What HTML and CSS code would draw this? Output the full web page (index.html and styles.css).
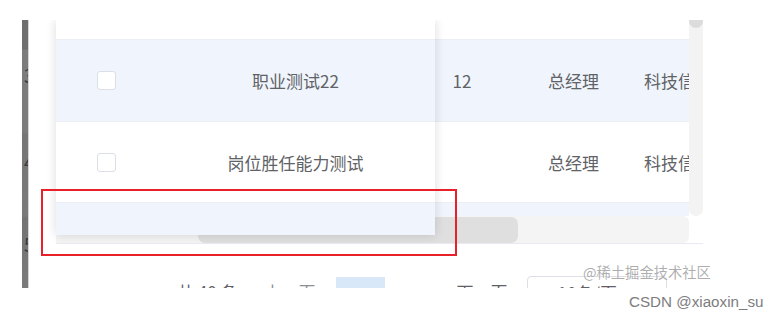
FILE: index.html
```html
<!DOCTYPE html>
<html lang="zh">
<head>
  <meta charset="UTF-8">
  <title>表格固定列</title>
  <link rel="stylesheet" href="styles.css">
</head>
<body>
<div class="page">
  <div class="shot">
    <!-- 左侧被截断的行号栏 -->
    <div class="strip">
      <div class="num num-3">3</div>
      <div class="num num-4">4</div>
      <div class="num num-5">5</div>
    </div>

    <div class="main">
      <div class="table">
        <div class="body">
          <div class="row head"></div>
          <div class="row r1 blue">
            <div class="cell"></div>
            <div class="cell c-num">12</div>
            <div class="cell c-role">总经理</div>
            <div class="cell c-dept">科技信息部</div>
          </div>
          <div class="row r2">
            <div class="cell"></div>
            <div class="cell c-num"></div>
            <div class="cell c-role">总经理</div>
            <div class="cell c-dept">科技信息部</div>
          </div>
          <div class="row r3 blue"></div>
          <div class="hbar"><div class="hthumb"></div></div>
        </div>
        <div class="vbar"><div class="vthumb"></div></div>

        <!-- 左侧固定列 -->
        <div class="fixed">
          <div class="frow head"></div>
          <div class="frow r1 blue">
            <div class="fcell"><span class="check"></span></div>
            <div class="fcell name">职业测试22</div>
          </div>
          <div class="frow r2">
            <div class="fcell"><span class="check"></span></div>
            <div class="fcell name">岗位胜任能力测试</div>
          </div>
          <div class="frow r3f blue"></div>
        </div>
      </div>

      <div class="pager">
        <span class="total">共 40 条</span>
        <span class="prev">上一页</span>
        <span class="active-page"></span>
        <span class="next">下一页</span>
        <span class="sizes">10条/页</span>
      </div>
    </div>
  </div>

  <div class="mark">@稀土掘金技术社区</div>
  <div class="csdn">CSDN @xiaoxin_su</div>
  <div class="redbox"></div>
</div>
</body>
</html>
```

FILE: styles.css
```css
body {
  margin: 0;
  background: #fff;
  font-family: "Noto Sans CJK SC", "Liberation Sans", sans-serif;
  color: #606266;
}

.page {
  position: relative;
  width: 777px;
  height: 319px;
  overflow: hidden;
}

.shot {
  display: flex;
  margin-top: 20px;
  height: 268px;
  overflow: hidden;
}

/* 左边灰色竖条 */
.strip {
  width: 6px;
  margin-left: 22px;
  border-right: 1px solid #d6d6d6;
  background: linear-gradient(#6e6e6e 0, #6e6e6e 29px, #7c7c7c 30px, #7c7c7c 112px, #767676 114px, #7a7a7a 196px, #737373 198px, #7b7b7b 100%);
  overflow: hidden;
}

.num {
  height: 20px;
  line-height: 20px;
  font-size: 18px;
  color: #3a3a3a;
  padding-left: 2px;
}
.num-3 { margin-top: 45px; }
.num-4 { margin-top: 67px; }
.num-5 { margin-top: 62px; }

.main {
  margin-left: 27px;
  width: 647px;
  display: flex;
  flex-direction: column;
}

.table {
  position: relative;
  display: grid;
  grid-template-columns: 633px 14px;
  height: 223px;
  border-bottom: 1px solid #e9ebf0;
}

.body {
  display: flex;
  flex-direction: column;
  overflow: hidden;
}

.row {
  display: grid;
  grid-template-columns: 379px 54px 145px 55px;
  align-items: center;
  font-size: 17px;
  border-bottom: 1px solid #ebeef5;
  box-sizing: border-box;
}

.head { height: 20px; background: #fff; }
.r1 { height: 82px; }
.r2 { height: 81px; background: #fff; }
.r3 { height: 13px; border-bottom: none; }
.blue { background: #f0f5fd; }

.cell { white-space: nowrap; overflow: hidden; }
.c-num { text-align: center; }
.c-role { padding-left: 59px; }
.c-dept { padding-left: 10px; }

.hbar {
  height: 27px;
  background: #f4f4f4;
  border-radius: 0 6px 6px 0;
  padding-left: 142px;
  padding-top: 1px;
  box-sizing: border-box;
}

.hthumb {
  width: 320px;
  height: 26px;
  background: #dfdfdf;
  border-radius: 7px;
}

.vbar {
  height: 196px;
  background: #f3f3f3;
  border-radius: 0 0 7px 7px;
  overflow: hidden;
}

.vthumb {
  height: 8px;
  background: #dcdcdc;
  border-radius: 0 0 7px 7px;
}

/* 固定列浮在表格上面 */
.fixed {
  position: absolute;
  left: 0;
  top: 0;
  width: 379px;
  height: 215px;
  background: #fff;
  box-shadow: 0 0 10px rgba(0, 0, 0, 0.14);
  display: flex;
  flex-direction: column;
}

.frow {
  display: grid;
  grid-template-columns: 100px 279px;
  align-items: center;
  font-size: 17px;
  border-bottom: 1px solid #ebeef5;
  box-sizing: border-box;
}

.r3f { flex: 1; border-bottom: none; }

.fcell { display: flex; justify-content: center; white-space: nowrap; }

.check {
  width: 17px;
  height: 17px;
  border: 1px solid #dcdfe6;
  border-radius: 3px;
  background: #fff;
}

/* 分页（底部被截断） */
.pager {
  display: flex;
  align-items: flex-start;
  padding-top: 32px;
  font-size: 17px;
  line-height: 32px;
  color: #5f6166;
  white-space: nowrap;
}

.total { margin-left: 121px; }
.prev { margin-left: 27px; color: #8e9096; }
.active-page {
  margin-left: 20px;
  margin-top: 1px;
  width: 49px;
  height: 32px;
  background: #d9e8f8;
}
.next { margin-left: 72px; }
.sizes {
  margin-left: 19px;
  width: 140px;
  height: 32px;
  box-sizing: border-box;
  border: 1px solid #dcdfe6;
  border-radius: 4px;
  padding-left: 30px;
  line-height: 32px;
}

/* 水印 */
.mark {
  position: absolute;
  left: 583px;
  top: 261px;
  font-size: 14.3px;
  color: rgba(120, 120, 120, 0.6);
  text-shadow: 0 0 1px #fff;
}

.csdn {
  position: absolute;
  left: 629px;
  top: 293px;
  font-family: "Liberation Sans", sans-serif;
  font-size: 15.2px;
  color: #7d7d7d;
}

.redbox {
  position: absolute;
  left: 41px;
  top: 189px;
  width: 416px;
  height: 67px;
  box-sizing: border-box;
  border: 2px solid #e8202a;
}
```
